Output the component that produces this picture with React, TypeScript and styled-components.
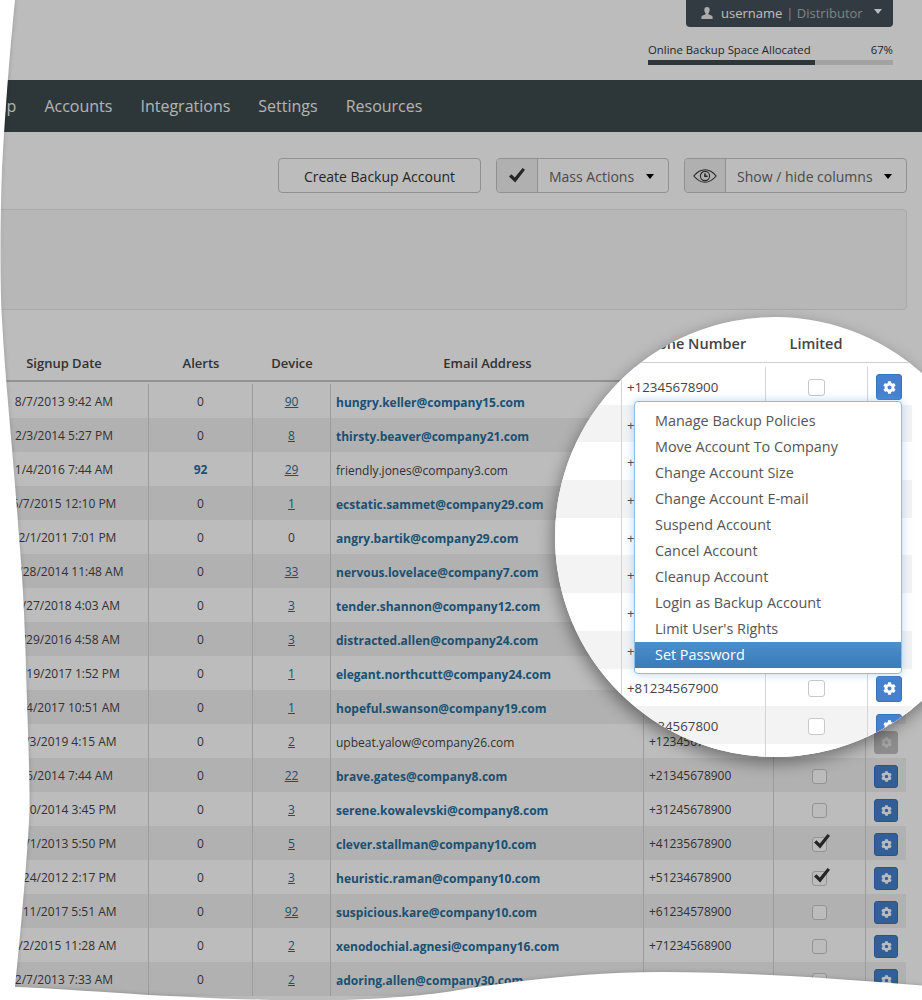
import React from "react";
import styled, { createGlobalStyle } from "styled-components";
import { FaCog } from "react-icons/fa";

const GlobalStyle = createGlobalStyle`
  html, body {
    margin: 0;
    padding: 0;
    background: #fff;
  }
  body {
    font-family: "Open Sans", "Liberation Sans", sans-serif;
    color: #333;
  }
`;

const Screen = styled.div`
  position: relative;
  width: 922px;
  height: 1000px;
  overflow: hidden;
  background: #fff;
`;

const Dim = styled.div`
  position: absolute;
  inset: 0;
  background: rgba(0, 0, 0, 0.263);
`;

const TornEdge = styled.svg`
  position: absolute;
  left: 0;
  top: 0;
  pointer-events: none;
  filter: drop-shadow(0 0 2px rgba(0, 0, 0, 0.2));
`;

/* header */
const TopBar = styled.header`
  display: flex;
  flex-direction: column;
  align-items: flex-end;
  height: 80px;
  padding-right: 29px;
  box-sizing: border-box;
`;

const UserMenu = styled.div`
  display: flex;
  align-items: center;
  width: 207px;
  height: 27px;
  box-sizing: border-box;
  padding: 0 0 1px 15px;
  background: #455159;
  border-radius: 0 0 4px 4px;
  font-size: 13px;
  color: #fff;
`;

const UserName = styled.span`
  margin-left: 8px;
`;

const UserRole = styled.span`
  margin-left: 4px;
  color: #aab4ba;
`;

const Caret = styled.span<{ $color?: string }>`
  display: inline-block;
  width: 0;
  height: 0;
  border-left: 4px solid transparent;
  border-right: 4px solid transparent;
  border-top: 5px solid ${(p) => p.$color || "#000"};
`;

const UserCaret = styled(Caret)`
  margin-left: 11px;
  margin-top: -3px;
`;

const Allocation = styled.div`
  width: 245px;
  margin-top: 15px;
`;

const AllocationLabel = styled.div`
  display: flex;
  justify-content: space-between;
  font-size: 11.35px;
  line-height: 15px;
  color: #333;
`;

const Bar = styled.div`
  height: 5px;
  margin-top: 3px;
  background: #ddd;
`;

const BarFill = styled.div`
  height: 100%;
  background: #3e4a4d;
`;

const Nav = styled.nav`
  display: flex;
  height: 52px;
  background: #3e4a4d;
  overflow: hidden;
`;

const NavList = styled.div`
  display: flex;
  margin-left: -52.5px;
`;

const NavItem = styled.a`
  display: flex;
  align-items: center;
  padding: 0 14px;
  font-size: 16px;
  color: #f2f2f2;
`;

/* toolbar */
const Toolbar = styled.div`
  display: flex;
  justify-content: flex-end;
  gap: 15px;
  margin-top: 26px;
  padding-right: 15px;
`;

const Button = styled.div`
  display: flex;
  align-items: center;
  justify-content: center;
  width: 203px;
  height: 35px;
  box-sizing: border-box;
  padding-top: 2px;
  border: 1px solid #c4c4c4;
  border-radius: 4px;
  font-size: 14px;
  color: #333;
`;

const ButtonGroup = styled.div<{ $width: number }>`
  display: flex;
  width: ${(p) => p.$width}px;
  height: 35px;
  box-sizing: border-box;
  border: 1px solid #c4c4c4;
  border-radius: 4px;
  font-size: 14px;
  color: #666;
`;

const GroupIcon = styled.div`
  display: flex;
  align-items: center;
  justify-content: center;
  width: 40px;
  flex: none;
  border-right: 1px solid #c4c4c4;
  background: #efefef;
  border-radius: 3px 0 0 3px;
`;

const GroupLabel = styled.div`
  display: flex;
  flex: 1;
  align-items: center;
  justify-content: space-between;
  padding: 2px 14px 0 11px;
`;

const FilterPanel = styled.div`
  height: 101px;
  box-sizing: border-box;
  margin: 16px 15px 0 -10px;
  background: #f8f8f8;
  border: 1px solid #e6e6e6;
  border-radius: 4px;
`;

/* table */
const BASE_COLUMNS = "168px 104px 78px 313px 130px 92px 41px";
const LENS_COLUMNS = "66px 144px 102px 45px";

const Table = styled.div`
  width: 926px;
  margin-left: -20px;
`;

const HeadRow = styled.div`
  display: grid;
  grid-template-columns: ${BASE_COLUMNS};
  height: 24px;
  margin-top: 46px;
  border-bottom: 2px solid #c8c8c8;
  font-size: 13px;
  font-weight: 600;
  color: #444;
`;

const HeadCell = styled.div<{ $nudge?: boolean }>`
  padding-left: ${(p) => (p.$nudge ? "2px" : "0")};
  text-align: center;
  line-height: 14px;
`;

const Rows = styled.div`
  padding-top: 2px;
`;

const Row = styled.div<{ $even: boolean }>`
  display: grid;
  grid-template-columns: ${BASE_COLUMNS};
  height: 34px;
  font-size: 12px;
  color: #444;
  background: ${(p) => (p.$even ? "#f1f1f1" : "#fff")};
`;

const Cell = styled.div<{ $center?: boolean; $ruled?: boolean; $low?: boolean }>`
  display: flex;
  align-items: center;
  box-sizing: border-box;
  justify-content: ${(p) => (p.$center ? "center" : "flex-start")};
  border-left: ${(p) => (p.$ruled ? "1px solid #d4d4d4" : "0")};
  padding-top: ${(p) => (p.$low ? "3px" : "0")};
  white-space: nowrap;
  overflow: hidden;
`;

const EmailCell = styled(Cell)`
  padding-left: 5px;
`;

const PhoneCell = styled(Cell)`
  padding-left: 5px;
`;

const Email = styled.span<{ $active: boolean }>`
  color: ${(p) => (p.$active ? "#266d9c" : "#444")};
  font-weight: ${(p) => (p.$active ? 700 : 400)};
`;

const AlertCount = styled.b`
  color: #266d9c;
`;

const DeviceLink = styled.a`
  color: #266d9c;
  text-decoration: underline;
`;

const CheckBox = styled.span<{ $size: number }>`
  position: relative;
  display: block;
  width: ${(p) => p.$size}px;
  height: ${(p) => p.$size}px;
  box-sizing: border-box;
  border: 1px solid #c8c8c8;
  border-radius: 3px;
  background: #fff;
`;

const CheckMark = styled.svg`
  position: absolute;
  left: 1px;
  top: -4px;
`;

const GearButton = styled.span<{ $off?: boolean; $size: number; $height: number }>`
  display: flex;
  align-items: center;
  justify-content: center;
  width: ${(p) => p.$size}px;
  height: ${(p) => p.$height}px;
  box-sizing: border-box;
  border-radius: 3px;
  background: ${(p) => (p.$off ? "#c0c0c0" : "#4581cf")};
  border: 1px solid ${(p) => (p.$off ? "#c0c0c0" : "#3a72ba")};
  color: ${(p) => (p.$off ? "#e2e2e2" : "#fff")};
`;

/* magnifier */
const Lens = styled.div`
  position: absolute;
  left: 555px;
  top: 317px;
  width: 440px;
  height: 440px;
  border-radius: 50%;
  overflow: hidden;
  background: #fff;
`;

const LensShadow = styled.div`
  position: absolute;
  left: 555px;
  top: 317px;
  width: 440px;
  height: 440px;
  border-radius: 50%;
  box-shadow: -2px 6px 16px rgba(0, 0, 0, 0.4);
`;

const LensHead = styled.div`
  display: grid;
  grid-template-columns: ${LENS_COLUMNS};
  width: 357px;
  height: 46px;
  box-sizing: border-box;
  padding-top: 17px;
  border-bottom: 1px solid #cfcfcf;
  font-size: 14.5px;
  font-weight: 600;
  color: #444;
  text-align: center;
`;

const LensRows = styled.div`
  width: 357px;
  padding-top: 4px;
`;

const LensRow = styled.div<{ $even: boolean }>`
  display: grid;
  grid-template-columns: ${LENS_COLUMNS};
  height: 37.7px;
  font-size: 13.3px;
  color: #444;
  background: ${(p) => (p.$even ? "#f3f3f3" : "#fff")};
`;

const LensPhone = styled(Cell)`
  padding-left: 5px;
  padding-top: 2px;
`;

const LensGearCell = styled(Cell)`
  padding-right: 2px;
`;

const Menu = styled.ul`
  position: absolute;
  left: 79px;
  top: 84px;
  width: 268px;
  height: 273px;
  box-sizing: border-box;
  margin: 0;
  padding: 6px 0;
  list-style: none;
  background: #fff;
  border: 1px solid #8dbce6;
  border-radius: 4px;
  box-shadow: 0 0 10px rgba(110, 175, 235, 0.5);
  overflow: hidden;
`;

const MenuItem = styled.li<{ $active?: boolean }>`
  height: 26px;
  padding-left: 20px;
  font-size: 14.4px;
  line-height: 26px;
  color: ${(p) => (p.$active ? "#fff" : "#555")};
  background: ${(p) => (p.$active ? "linear-gradient(#4b8fcb, #3a7bb8)" : "none")};
`;

type Account = {
  date: string;
  alerts: number;
  devices: number;
  email: string;
  phone: string;
  limited?: boolean;
  inactive?: boolean;
};

const ACCOUNTS: Account[] = [
  { date: "8/7/2013 9:42 AM", alerts: 0, devices: 90, email: "hungry.keller@company15.com", phone: "+12345678900" },
  { date: "2/3/2014 5:27 PM", alerts: 0, devices: 8, email: "thirsty.beaver@company21.com", phone: "+21345678900" },
  { date: "1/4/2016 7:44 AM", alerts: 92, devices: 29, email: "friendly.jones@company3.com", phone: "+31245678900", inactive: true },
  { date: "6/7/2015 12:10 PM", alerts: 0, devices: 1, email: "ecstatic.sammet@company29.com", phone: "+41235678900" },
  { date: "12/1/2011 7:01 PM", alerts: 0, devices: 0, email: "angry.bartik@company29.com", phone: "+51234678900" },
  { date: "11/28/2014 11:48 AM", alerts: 0, devices: 33, email: "nervous.lovelace@company7.com", phone: "+61234578900" },
  { date: "12/27/2018 4:03 AM", alerts: 0, devices: 3, email: "tender.shannon@company12.com", phone: "+71234568900" },
  { date: "10/29/2016 4:58 AM", alerts: 0, devices: 3, email: "distracted.allen@company24.com", phone: "+81234567800" },
  { date: "11/19/2017 1:52 PM", alerts: 0, devices: 1, email: "elegant.northcutt@company24.com", phone: "+81234567900" },
  { date: "11/4/2017 10:51 AM", alerts: 0, devices: 1, email: "hopeful.swanson@company19.com", phone: "+91234567800" },
  { date: "12/3/2019 4:15 AM", alerts: 0, devices: 2, email: "upbeat.yalow@company26.com", phone: "+12345678900", inactive: true },
  { date: "6/6/2014 7:44 AM", alerts: 0, devices: 22, email: "brave.gates@company8.com", phone: "+21345678900" },
  { date: "1/10/2014 3:45 PM", alerts: 0, devices: 3, email: "serene.kowalevski@company8.com", phone: "+31245678900" },
  { date: "11/1/2013 5:50 PM", alerts: 0, devices: 5, email: "clever.stallman@company10.com", phone: "+41235678900", limited: true },
  { date: "4/24/2012 2:17 PM", alerts: 0, devices: 3, email: "heuristic.raman@company10.com", phone: "+51234678900", limited: true },
  { date: "5/11/2017 5:51 AM", alerts: 0, devices: 92, email: "suspicious.kare@company10.com", phone: "+61234578900" },
  { date: "4/2/2015 11:28 AM", alerts: 0, devices: 2, email: "xenodochial.agnesi@company16.com", phone: "+71234568900" },
  { date: "2/7/2013 7:33 AM", alerts: 0, devices: 2, email: "adoring.allen@company30.com", phone: "+81234567900" },
];

const MENU = [
  "Manage Backup Policies",
  "Move Account To Company",
  "Change Account Size",
  "Change Account E-mail",
  "Suspend Account",
  "Cancel Account",
  "Cleanup Account",
  "Login as Backup Account",
  "Limit User's Rights",
];

const TICK = "M0 8.5 L2.4 6.2 L5.8 9.6 L13.6 0 L16 1.8 L6.2 14.6 Z";

const UserIcon = () => (
  <svg width="12" height="12" viewBox="0 0 12 12" fill="#e8e8e8">
    <path d="M6 0 C4.2 0 3.3 1.3 3.3 2.9 C3.3 4.4 4 5.6 4.6 6.3 L4.6 7.2 L0.6 9 L0.3 12 L11.7 12 L11.4 9 L7.4 7.2 L7.4 6.3 C8 5.6 8.7 4.4 8.7 2.9 C8.7 1.3 7.8 0 6 0 Z" />
  </svg>
);

const EyeIcon = () => (
  <svg width="24" height="14" viewBox="0 0 24 14" fill="none" stroke="#333" strokeWidth="1.1">
    <path d="M0.8 7 C5 2 8.5 0.8 12 0.8 C15.5 0.8 19 2 23.2 7 C19 12 15.5 13.2 12 13.2 C8.5 13.2 5 12 0.8 7 Z" />
    <circle cx="12" cy="7" r="4.6" />
    <path d="M12 4.6 L12 7.2 L14.6 7.2" strokeWidth="1.6" />
  </svg>
);

function App() {
  return (
    <Screen>
      <GlobalStyle />
      <TopBar>
        <UserMenu>
          <UserIcon />
          <UserName>username</UserName>
          <UserRole>| Distributor</UserRole>
          <UserCaret $color="#fff" />
        </UserMenu>
        <Allocation>
          <AllocationLabel>
            <span>Online Backup Space Allocated</span>
            <span>67%</span>
          </AllocationLabel>
          <Bar>
            <BarFill style={{ width: "68%" }} />
          </Bar>
        </Allocation>
      </TopBar>
      <Nav>
        <NavList>
          <NavItem>Backup</NavItem>
          <NavItem>Accounts</NavItem>
          <NavItem>Integrations</NavItem>
          <NavItem>Settings</NavItem>
          <NavItem>Resources</NavItem>
        </NavList>
      </Nav>
      <Toolbar>
        <Button>Create Backup Account</Button>
        <ButtonGroup $width={173}>
          <GroupIcon>
            <svg width="16" height="15" viewBox="0 0 16 15" fill="#333">
              <path d={TICK} />
            </svg>
          </GroupIcon>
          <GroupLabel>
            Mass Actions
            <Caret />
          </GroupLabel>
        </ButtonGroup>
        <ButtonGroup $width={223}>
          <GroupIcon>
            <EyeIcon />
          </GroupIcon>
          <GroupLabel>
            Show / hide columns
            <Caret />
          </GroupLabel>
        </ButtonGroup>
      </Toolbar>
      <FilterPanel />
      <Table>
        <HeadRow>
          <HeadCell>Signup Date</HeadCell>
          <HeadCell $nudge>Alerts</HeadCell>
          <HeadCell $nudge>Device</HeadCell>
          <HeadCell $nudge>Email Address</HeadCell>
          <HeadCell>Phone Number</HeadCell>
          <HeadCell>Limited</HeadCell>
          <HeadCell />
        </HeadRow>
        <Rows>
          {ACCOUNTS.map((a, i) => (
            <Row key={a.email} $even={i % 2 === 1}>
              <Cell $center>{a.date}</Cell>
              <Cell $center $ruled>
                {a.alerts > 0 ? <AlertCount>{a.alerts}</AlertCount> : a.alerts}
              </Cell>
              <Cell $center $ruled>
                {a.devices > 0 ? <DeviceLink>{a.devices}</DeviceLink> : a.devices}
              </Cell>
              <EmailCell $ruled $low>
                <Email $active={!a.inactive}>{a.email}</Email>
              </EmailCell>
              <PhoneCell $ruled>{a.phone}</PhoneCell>
              <Cell $center $ruled $low>
                <CheckBox $size={15}>
                  {a.limited && (
                    <CheckMark width="16" height="15" viewBox="0 0 16 15" fill="#333">
                      <path d={TICK} />
                    </CheckMark>
                  )}
                </CheckBox>
              </Cell>
              <Cell $center $ruled $low>
                <GearButton $off={a.inactive} $size={24} $height={23}>
                  <FaCog size={11} />
                </GearButton>
              </Cell>
            </Row>
          ))}
        </Rows>
      </Table>
      <Dim />
      <LensShadow />
      <Lens>
        <LensHead>
          <span />
          <span>Phone Number</span>
          <span>Limited</span>
          <span />
        </LensHead>
        <LensRows>
          {ACCOUNTS.slice(0, 11).map((a, i) => (
            <LensRow key={a.email} $even={i % 2 === 1}>
              <span />
              <LensPhone $ruled>{a.phone}</LensPhone>
              <Cell $center $ruled $low>
                <CheckBox $size={17} />
              </Cell>
              <LensGearCell $center $ruled $low>
                <GearButton $size={26} $height={26}>
                  <FaCog size={13} />
                </GearButton>
              </LensGearCell>
            </LensRow>
          ))}
        </LensRows>
        <Menu>
          {MENU.map((label) => (
            <MenuItem key={label}>{label}</MenuItem>
          ))}
          <MenuItem $active>Set Password</MenuItem>
        </Menu>
      </Lens>
      <TornEdge width="922" height="1000" viewBox="0 0 922 1000" fill="#fff">
        <path d="M-6 -6 L15 -6 L15 0 C10 50 5 110 2 170 C0 220 0 290 2 320 C6 390 13 450 18.5 530 C21.5 565 24 600 25.5 650 C27 710 30 770 29.5 810 C28 850 20 940 15 987 C60 988 150 997 270 1000 C340 1002 420 998 470 988 C540 978 600 972 661 972 C740 972 830 978 928 986 L928 1006 L-6 1006 Z" />
      </TornEdge>
    </Screen>
  );
}

export default App;
